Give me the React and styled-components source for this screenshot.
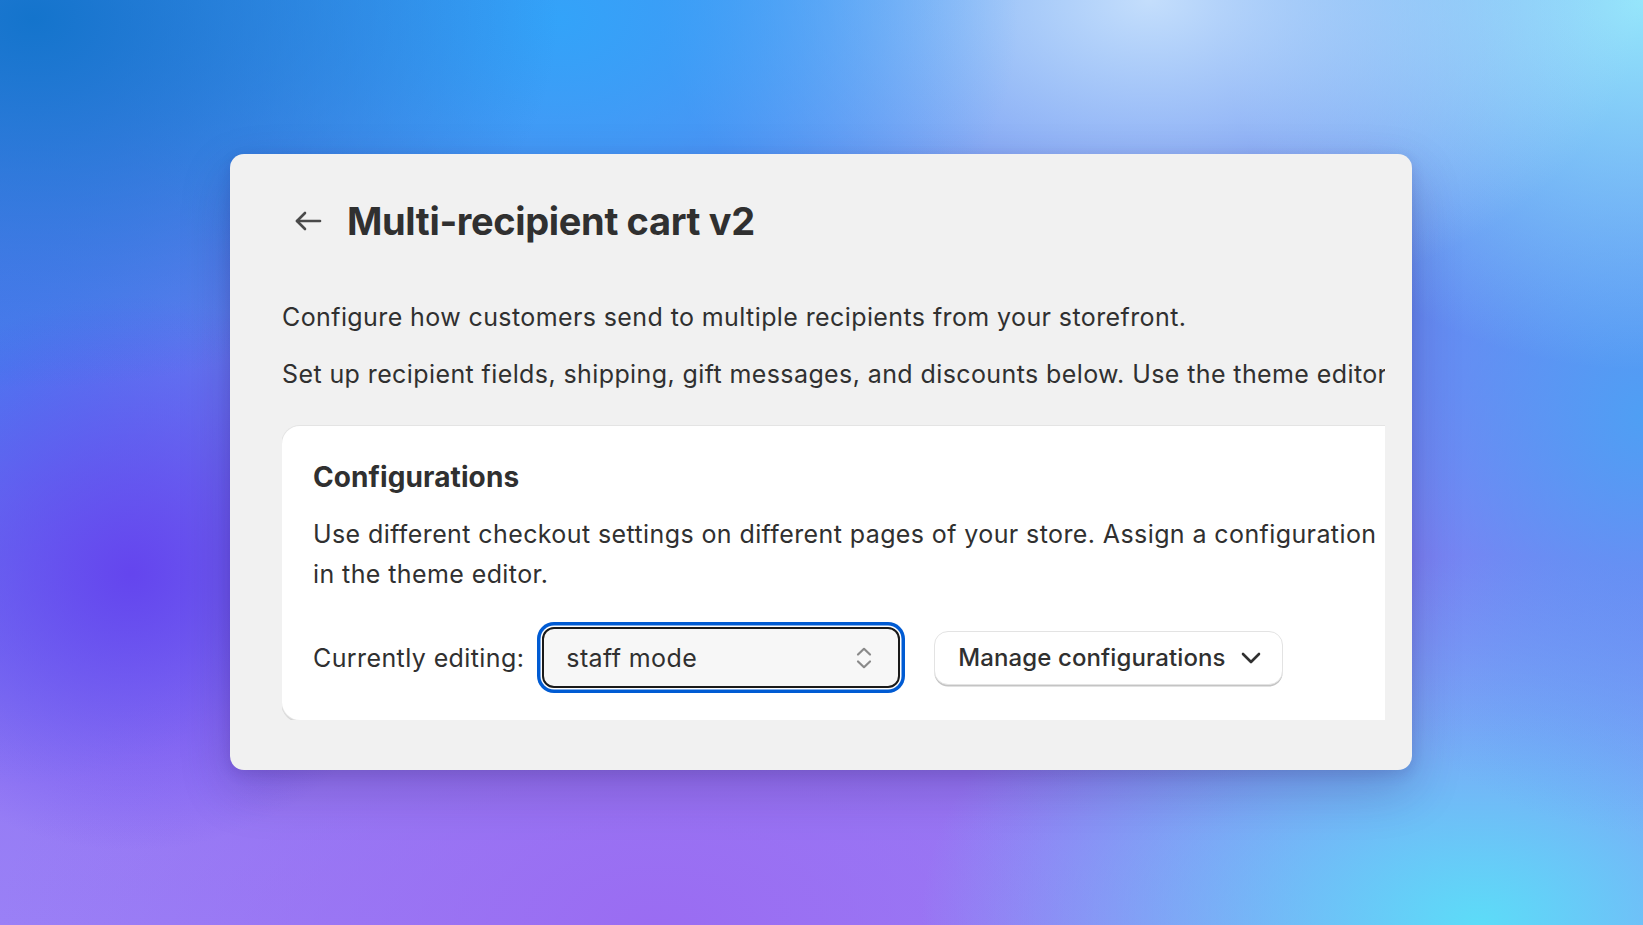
import React from 'react'
import styled, { createGlobalStyle } from 'styled-components'

const GlobalStyle = createGlobalStyle`
	html, body {
		margin: 0;
		padding: 0;
	}
	body {
		font-family: Inter, 'Noto Sans', 'Liberation Sans', sans-serif;
		color: #303030;
		-webkit-font-smoothing: antialiased;
	}
`

const Backdrop = styled.div`
	width: 1643px;
	height: 925px;
	overflow: hidden;
	box-sizing: border-box;
	padding: 154px 0 0 230px;
	background-color: #8c7cf3;
	background-image:
		radial-gradient(ellipse 32% 40% at 2% 2%, #1474cc 0%, rgba(20, 116, 204, 0) 100%),
		radial-gradient(ellipse 28% 38% at 34% 2%, #33a3f9 0%, rgba(51, 163, 249, 0) 100%),
		radial-gradient(ellipse 30% 34% at 70% 0%, #c4defc 0%, rgba(196, 222, 252, 0) 100%),
		radial-gradient(ellipse 26% 40% at 100% 0%, #96e6fb 0%, rgba(150, 230, 251, 0) 100%),
		radial-gradient(ellipse 22% 45% at 100% 45%, #4f9ff4 0%, rgba(79, 159, 244, 0) 100%),
		radial-gradient(ellipse 34% 40% at 90% 100%, #5cdcf8 0%, rgba(92, 220, 248, 0) 100%),
		radial-gradient(ellipse 18% 30% at 8% 62%, #6445ee 0%, rgba(100, 69, 238, 0) 100%),
		radial-gradient(ellipse 25% 45% at 0% 40%, #4c7af0 0%, rgba(76, 122, 240, 0) 100%),
		radial-gradient(ellipse 40% 40% at 40% 100%, #9a6cf2 0%, rgba(154, 108, 242, 0) 100%),
		linear-gradient(180deg, #4f8ff0 0%, #8d76f3 60%, #9a80f6 100%);
`

const Window = styled.div`
	width: 1182px;
	height: 616px;
	box-sizing: border-box;
	padding: 43px 27px 50px 52px;
	background: #f1f1f1;
	border-radius: 14px;
	box-shadow: 0 20px 50px rgba(30, 20, 90, 0.22), 0 4px 14px rgba(30, 20, 90, 0.12);
`

const HeaderRow = styled.div`
	display: flex;
	align-items: center;
	gap: 25px;
	padding-left: 12px;
	height: 48px;
`

const BackButton = styled.button`
	display: flex;
	align-items: center;
	justify-content: center;
	padding: 0;
	border: none;
	background: none;
	color: #4a4a4a;
	cursor: pointer;
`

const Title = styled.h1`
	margin: 0;
	font-size: 38px;
	line-height: 48px;
	font-weight: 700;
	letter-spacing: -0.35px;
	color: #303030;
`

const Clip = styled.div`
	overflow: hidden;
	margin-top: 56px;
`

const Wide = styled.div`
	width: 1200px;
`

const Lead = styled.p`
	margin: 0 0 ${(props) => (props.$gap ? props.$gap : '0px')};
	font-size: 25px;
	line-height: 32px;
	letter-spacing: 0.4px;
	white-space: nowrap;
	color: #303030;
`

const Panel = styled.section`
	margin-top: 36px;
	padding: 35px 31px 32px;
	background: #ffffff;
	border-radius: 18px;
	box-shadow: 0 0 0 1px #e4e4e4, 0 2px 0 0.5px #d6d6d6;
`

const PanelTitle = styled.h2`
	margin: 0;
	font-size: 28px;
	line-height: 32px;
	font-weight: 700;
	letter-spacing: 0.1px;
`

const PanelText = styled.p`
	margin: 21px 0 0;
	font-size: 25px;
	line-height: 40px;
	letter-spacing: 0.4px;
	white-space: nowrap;
`

const EditRow = styled.div`
	display: flex;
	align-items: center;
	margin-top: 33px;
`

const Label = styled.span`
	font-size: 25px;
	line-height: 32px;
	letter-spacing: 0.4px;
	margin-right: 18px;
	white-space: nowrap;
`

const SelectBox = styled.div`
	display: flex;
	align-items: center;
	justify-content: space-between;
	flex-shrink: 0;
	box-sizing: border-box;
	width: 358px;
	height: 61px;
	padding: 0 26px 0 22px;
	background: #f7f7f7;
	border: 2px solid #1a1a1a;
	border-radius: 12px;
	box-shadow: 0 0 0 1.5px #ffffff, 0 0 0 5px #005bd3;
	font-size: 25px;
	letter-spacing: 0.4px;
	color: #303030;
`

const MenuButton = styled.button`
	display: flex;
	align-items: center;
	gap: 15px;
	flex-shrink: 0;
	box-sizing: border-box;
	height: 54px;
	margin-left: 34px;
	padding: 0 21px 0 23px;
	background: #ffffff;
	border: 1.5px solid #e3e3e3;
	border-radius: 14px;
	box-shadow: 0 2px 0 -0.5px #c4c4c4;
	font-family: inherit;
	font-size: 24px;
	font-weight: 500;
	letter-spacing: 0.1px;
	white-space: nowrap;
	color: #303030;
	cursor: pointer;
`

const ArrowLeft = () => (
	<svg width="28" height="22" viewBox="0 0 28 22" fill="none" stroke="currentColor" strokeWidth="2.6" strokeLinecap="round" strokeLinejoin="round">
		<path d="M26 11H3" />
		<path d="M11 3L3 11L11 19" />
	</svg>
)

const UpDown = () => (
	<svg width="16" height="22" viewBox="0 0 16 22" fill="none" stroke="#8a8a8a" strokeWidth="2.2" strokeLinecap="round" strokeLinejoin="round">
		<path d="M2 7.5L8 1.8L14 7.5" />
		<path d="M2 14.5L8 20.2L14 14.5" />
	</svg>
)

const ChevronDown = () => (
	<svg width="20" height="12" viewBox="0 0 20 12" fill="none" stroke="#303030" strokeWidth="2.6" strokeLinecap="round" strokeLinejoin="round">
		<path d="M2 2L10 10L18 2" />
	</svg>
)

const App = () => {
	return (
		<>
			<GlobalStyle />
			<Backdrop>
				<Window>
					<HeaderRow>
						<BackButton aria-label="Back">
							<ArrowLeft />
						</BackButton>
						<Title>Multi-recipient cart v2</Title>
					</HeaderRow>
					<Clip>
						<Wide>
							<Lead $gap="25px">Configure how customers send to multiple recipients from your storefront.</Lead>
							<Lead>Set up recipient fields, shipping, gift messages, and discounts below. Use the theme editor to place the cart.</Lead>
							<Panel>
								<PanelTitle>Configurations</PanelTitle>
								<PanelText>
									Use different checkout settings on different pages of your store. Assign a configuration
									<br />
									in the theme editor.
								</PanelText>
								<EditRow>
									<Label>Currently editing:</Label>
									<SelectBox>
										<span>staff mode</span>
										<UpDown />
									</SelectBox>
									<MenuButton>
										Manage configurations
										<ChevronDown />
									</MenuButton>
								</EditRow>
							</Panel>
						</Wide>
					</Clip>
				</Window>
			</Backdrop>
		</>
	)
}

export default App
